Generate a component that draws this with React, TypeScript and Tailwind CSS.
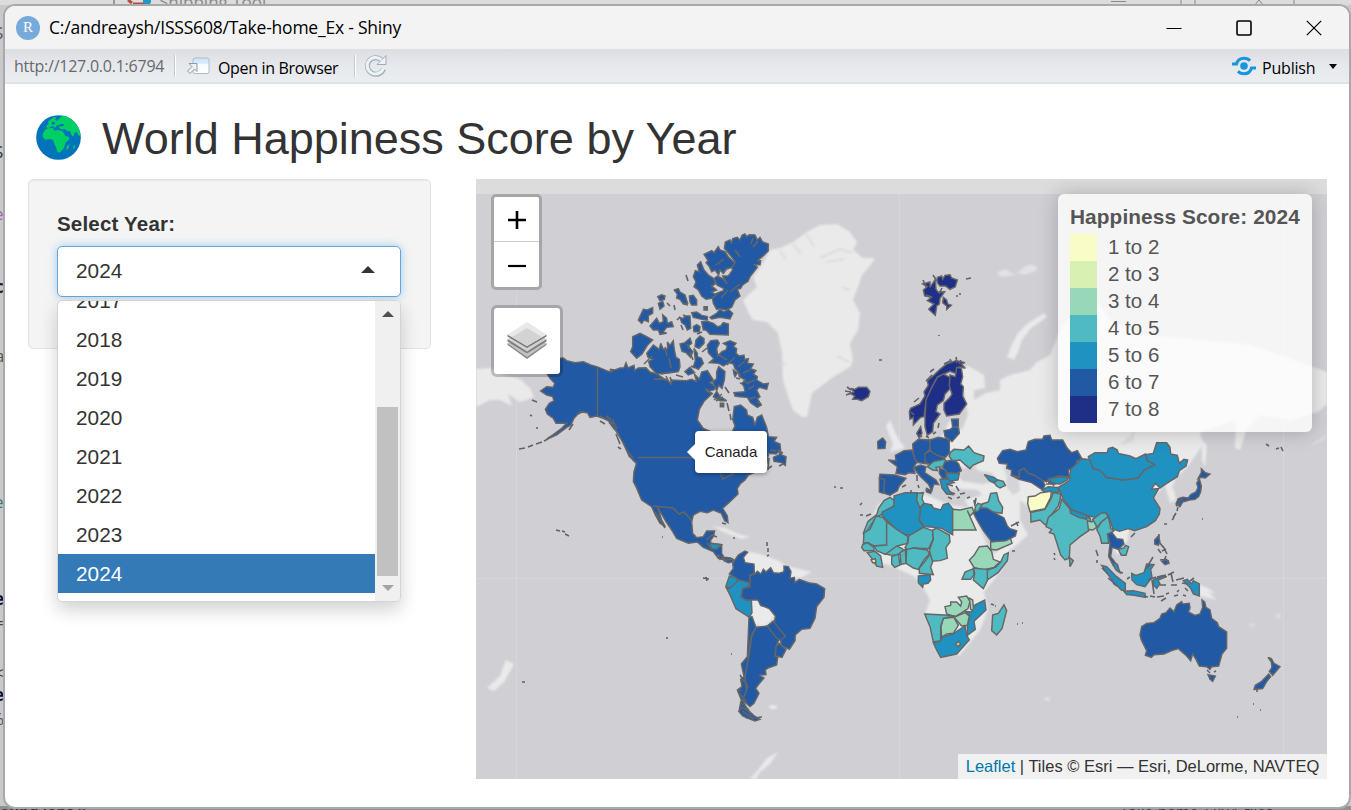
import React from "react";

type Shape = [color: string, points: string];

const C12 = "#fafcc8";
const C23 = "#d9f0b3";
const C34 = "#98d8b8";
const C45 = "#4fbac1";
const C56 = "#2092c1";
const C67 = "#2159a5";
const C78 = "#1f2e87";

const LEGEND: [string, string][] = [
  ["bg-[#fafcc8]", "1 to 2"],
  ["bg-[#d9f0b3]", "2 to 3"],
  ["bg-[#98d8b8]", "3 to 4"],
  ["bg-[#4fbac1]", "4 to 5"],
  ["bg-[#2092c1]", "5 to 6"],
  ["bg-[#2159a5]", "6 to 7"],
  ["bg-[#1f2e87]", "7 to 8"],
];

const YEARS = ["2017", "2018", "2019", "2020", "2021", "2022", "2023", "2024"];

const ARCTIC: Shape[] = [
  [C67, "313,85 316,66 330,60 335,70 338,56 352,52 360,60 366,46 375,42 380,50 388,44 405,45 412,60 420,52 428,66 445,72 445,92 432,106 412,122 422,122 420,134 404,134 412,142 390,170 384,184 368,195 362,205 352,208 360,228 345,240 335,262 318,270 300,266 290,268 280,250 276,226 295,218 310,212 312,206 292,196 282,176 292,168 308,176 322,192 308,168 325,168 338,150 330,130 345,125 330,105"],
  [C67, "252,103 275,92 282,98 295,80 300,90 315,95 326,112 345,130 335,142 318,148 308,158 300,150 296,165 285,150 275,155 268,140 258,128 264,122"],
  [C67, "220,170 226,152 238,156 232,135 242,125 252,150 265,165 280,175 286,192 275,198 290,210 275,216 288,225 275,235 258,238 245,228 235,210 222,200 228,186"],
  [C67, "163,210 175,206 180,216 195,225 203,250 190,252 180,238 170,235 172,222"],
  [C67, "208,228 220,226 230,240 230,255 215,255 210,246"],
  [C67, "113,230 125,224 135,228 133,238 120,242"],
  [C67, "115,250 128,244 132,258 120,268"],
  [C67, "55,300 70,268 82,270 98,263 98,280 85,287 85,305 72,300 65,310"],
  [C67, "90,318 110,295 118,310 130,305 128,284 140,295 142,310 155,305 160,320 140,322 130,335 140,340 120,343 115,330 100,330"],
  [C67, "180,292 190,296 195,288 210,288 212,325 202,330 195,315 185,308"],
  [C67, "215,278 230,276 245,286 262,290 262,300 245,298 220,292"],
  [C67, "270,292 290,280 300,268 312,276 325,268 338,280 330,297 300,292 275,297"],
  [C67, "245,305 262,304 280,310 292,320 302,318 310,308 325,312 325,345 270,343 258,330 250,330"],
  [C67, "220,320 230,314 240,320 238,335 222,335"],
  [C67, "38,350 60,340 80,350 98,360 82,376 66,402 50,415 32,395 38,380"],
  [C67, "80,400 100,375 118,388 122,370 130,388 143,386 142,366 150,376 160,362 163,390 168,412 178,418 180,440 175,455 150,458 110,462 90,440 86,424 98,418 84,412"],
  [C67, "180,372 195,368 210,355 215,370 205,378 218,395 212,412 198,398 186,394"],
  [C67, "228,360 240,348 252,356 252,370 237,385 225,380"],
  [C67, "222,385 232,400 232,410 244,415 250,430 235,448 220,440 226,422"],
  [C67, "195,455 210,442 224,458 205,465"],
  [C67, "265,398 262,376 272,362 292,360 298,370 290,385 293,408 306,395 318,390 322,378 310,370 330,362 348,370 340,380 350,386 348,400 358,408 372,405 374,418 385,416 382,430 400,432 392,446 408,452 400,462 412,470 410,480 430,492 445,490 440,508 418,502 410,510 420,530 412,536 424,555 412,562 392,548 382,532 360,530 345,528 342,518 375,515 372,500 366,490 376,480 358,470 355,455 345,446 340,432 326,428 310,438 296,430 268,428 282,416"],
  [C67, "280,530 290,514 300,530 320,542 300,542"],
  [C67, "290,455 296,440 315,455 313,480 306,505 296,496 290,512 278,486 290,476"],
  [C67, "340,450 352,458 345,470 342,462"],
  ["#666", "252,260 262,260 262,270 252,270"],
  ["#666", "301,550 311,550 311,560 301,560"],
  [C78, "692,505 705,508 715,502 740,502 750,514 745,530 725,542 712,538 698,538 704,528 690,520 702,516"],
];

const NORTH_AMERICA: Shape[] = [
  [C67, "135,60 190,54 200,62 225,68 250,65 272,75 290,80 325,94 338,96 330,88 345,90 360,84 372,84 378,68 384,84 402,76 404,92 415,84 438,83 450,96 470,102 490,115 462,118 500,118 515,134 512,120 560,122 575,118 590,125 583,102 598,118 605,96 622,92 640,120 630,128 650,142 640,150 620,152 635,162 612,184 598,208 592,240 610,265 632,275 650,305 690,330 694,280 705,258 698,238 703,200 722,195 740,210 742,225 758,232 765,255 772,232 785,225 800,262 805,290 830,292 822,304 840,312 842,330 828,342 806,340 800,370 775,392 745,405 735,420 722,430 712,445 714,462 685,490 668,505 682,528 684,548 674,542 664,520 640,510 622,518 600,514 580,525 575,545 578,580 590,593 610,590 620,573 644,573 640,590 632,600 632,610 665,614 665,640 672,652 692,654 705,662 690,664 655,655 640,635 610,622 592,606 565,610 530,595 515,570 498,545 472,500 485,540 496,560 480,550 466,525 455,500 425,480 408,440 400,425 402,395 410,368 388,350 370,310 350,275 325,240 290,228 270,232 262,218 240,215 222,235 212,256 200,262 170,285 140,298 165,280 185,265 200,250 168,250 160,235 142,222 136,208 148,190 162,182 158,170 140,165 122,153 140,140 160,142 164,130 150,115 140,100"],
  [C56, "630,610 665,614 650,628 634,626"],
  [C78, "652,645 668,652 660,658"],
  [C67, "820,352 838,344 840,328 845,345 858,350 856,376 845,368 822,364"],
];

const SOUTH_AMERICA: Shape[] = [
  [C67, "128,112 138,120 158,118 158,126 145,128 132,122"],
  [C67, "158,130 175,105 195,93 203,97 190,112 195,128 222,132 223,160 210,165 210,200 185,185 165,172 148,162 160,145"],
  [C56, "148,168 165,172 176,182 165,192 148,206 138,198"],
  [C56, "137,200 148,206 176,180 206,188 206,198 188,206 183,230 196,240 214,240 216,278 208,292 168,266 150,225"],
  [C67, "210,166 225,162 232,154 243,162 250,148 258,156 272,143 280,158 296,160 312,155 312,138 325,140 333,155 330,175 343,172 345,188 358,178 385,188 410,192 434,206 432,232 410,260 405,295 390,325 365,328 346,345 345,362 328,388 304,376 300,345 285,330 262,318 284,304 286,288 268,266 242,256 234,240 215,240 196,240 184,230 188,206 210,200"],
  [C67, "207,292 216,290 228,322 215,345 210,370 205,420 195,470 200,515 188,540 205,575 228,592 200,594 178,568 184,540 172,510 186,500 182,478 192,470 184,432 202,410"],
  [C67, "228,322 262,318 285,338 298,355 290,375 285,408 293,412 290,435 262,445 256,450 258,464 238,466 252,474 240,488 227,505 237,520 222,550 210,560 188,540 200,510 195,470 207,405 215,350"],
  [C67, "262,318 280,303 300,330 316,348 302,362 288,352"],
  [C67, "297,370 318,388 306,412 286,408 288,380"],
  [C67, "186,562 200,570 212,582 240,598 225,603 206,596 188,588 176,574"],
];

const EUROPE: Shape[] = [
  [C78, "218,72 240,66 240,82 256,58 258,88 264,96 284,95 270,115 268,132 260,138 256,166 236,148 252,132 232,122 244,112 224,108 220,90 232,80"],
  [C78, "262,52 275,48 278,58 285,46 300,44 305,54 322,60 316,80 300,88 286,78 270,78 262,68"],
  [C78, "280,112 290,120 293,132 304,136 290,148 290,138 278,128"],
  [C78, "178,455 182,445 210,432 225,408 222,396 235,376 232,362 252,345 270,328 290,312 318,302 330,304 345,308 334,312 346,325 328,320 322,342 300,334 275,345 262,352 244,385 240,400 228,422 222,470 212,472 190,495 190,472 180,478"],
  [C78, "225,475 228,420 244,385 262,352 280,342 300,352 300,386 285,402 280,422 262,435 258,455 270,462 250,490 248,515 232,526 225,500"],
  [C78, "300,345 316,350 320,322 334,325 338,350 332,372 340,380 338,408 350,432 328,462 290,468 282,450 282,430 300,412 306,402 298,378"],
  [C78, "200,520 212,500 216,520 208,535"],
  [C67, "305,478 325,477 325,500 308,502"],
  [C67, "282,512 300,508 312,500 326,504 328,520 306,545 285,530"],
  [C67, "188,552 205,538 240,540 240,568 224,582 240,600 232,612 196,606 190,580"],
  [C67, "240,540 265,532 298,538 298,580 286,592 252,585 240,570"],
  [C67, "115,600 138,602 136,586 162,572 186,570 192,590 200,608 190,622 195,640 176,638 166,644 138,640 142,620"],
  [C67, "90,643 135,645 168,655 148,678 142,692 120,706 102,700 100,660 88,655"],
  [C67, "88,655 104,658 100,700 88,696"],
  [C67, "192,622 212,615 228,620 224,638 258,660 266,674 252,672 245,692 235,672 212,650 200,636"],
  [C67, "224,582 240,572 262,586 284,594 280,604 256,602 240,614 226,606"],
  [C45, "232,620 250,605 284,598 292,606 278,620 258,622 262,632 248,630"],
  [C67, "284,606 312,598 326,612 334,632 318,642 292,638 278,622"],
  [C56, "290,640 328,640 324,660 300,664 292,652"],
  [C67, "268,624 288,632 290,655 278,656 268,640"],
  [C56, "270,658 292,656 312,668 290,672 296,690 308,704 290,702 276,684"],
  [C67, "83,545 98,534 107,545 105,565 84,566"],
  [C45, "298,590 300,578 312,568 342,570 356,558 372,578 402,588 400,602 368,616 360,626 345,614 330,600 308,602"],
  [C56, "403,644 432,652 445,662 430,668 418,662"],
  [C45, "432,668 445,660 460,664 466,676 450,684 440,678"],
  [C67, "228,690 246,690 242,700 230,696"],
];

const AFRICA: Shape[] = [
  [C45, "132,78 134,62 120,52 102,62 86,84 80,104 54,124 40,160 46,180 52,152 78,112 98,102"],
  [C45, "78,108 98,112 110,125 110,196 72,198 54,188 40,190 42,158 60,148"],
  [C56, "132,48 165,38 202,38 200,60 212,88 208,122 222,142 182,165 165,165 138,148 95,105 97,96 132,78"],
  [C45, "202,40 220,38 216,56 222,70 210,84 200,60"],
  [C56, "212,82 222,70 245,75 250,84 272,90 280,74 295,70 308,86 308,164 275,145 250,142 222,140 208,120"],
  [C34, "308,88 330,90 366,82 372,96 360,108 352,92 378,150 308,150"],
  [C45, "110,125 140,148 174,170 172,190 142,198 120,215 106,223 80,212 72,198 110,195"],
  [C45, "174,188 176,168 220,142 248,152 250,176 236,206 192,204 175,212 165,202"],
  [C45, "248,150 260,144 298,165 300,186 288,202 292,235 270,242 246,244 238,210 250,178"],
  [C45, "170,208 190,204 232,210 238,222 222,240 205,268 190,264 168,250"],
  [C45, "240,222 248,245 242,262 250,284 208,280 208,264 228,240"],
  [C45, "108,222 140,198 158,206 160,216 145,226 120,225"],
  [C45, "125,230 145,222 150,255 134,262 125,252"],
  [C45, "150,218 166,208 168,250 153,253"],
  [C45, "38,194 52,188 72,202 72,212 42,212 35,202"],
  [C45, "52,218 75,214 92,228 98,262 80,258 66,236"],
  [C23, "63,240 76,236 78,248 68,248"],
  [C56, "205,288 240,284 242,300 234,310 220,312 218,322 205,308"],
  [C34, "372,226 388,200 412,198 425,215 430,238 450,246 432,262 400,270 372,262 358,240"],
  [C45, "412,270 436,262 452,246 462,224 475,218 472,242 444,278 412,300"],
  [C45, "370,265 412,268 412,302 400,326 370,300 374,280"],
  [C45, "336,298 345,276 370,266 372,284 362,298"],
  [C34, "285,380 302,376 302,366 320,366 332,378 335,366 325,352 350,348 360,364 354,386 332,400 315,410 290,402"],
  [C34, "358,354 368,360 370,380 376,398 362,388"],
  [C56, "375,375 404,360 408,390 372,424 376,448 352,466 352,438 360,408 346,394 366,396"],
  [C34, "312,412 345,398 358,408 352,436 335,438"],
  [C34, "280,415 312,412 325,436 310,460 290,462 275,472 273,440"],
  [C45, "224,402 285,405 315,408 280,415 272,440 272,482 250,486 240,440"],
  [C56, "250,488 270,484 278,470 308,462 345,438 350,466 358,480 320,522 272,532 260,510"],
  [C34, "316,492 326,484 332,492 324,500"],
  [C45, "428,405 445,400 462,374 470,392 456,446 440,465 425,452"],
  [C34, "422,185 465,182 480,170 486,190 440,210 422,208"],
  [C67, "370,98 388,84 410,82 430,96 462,114 472,138 480,146 500,152 496,168 468,182 425,185 400,152 380,118"],
  [C45, "396,72 415,66 422,40 440,38 446,62 458,82 456,100 430,96 410,84 390,84"],
  [C45, "376,80 384,70 396,74 386,92 374,96"],
];

const ASIA: Shape[] = [
  [C67, "52,175 68,152 90,148 112,155 138,150 145,125 165,118 188,118 192,108 210,106 215,120 248,120 262,145 275,158 292,152 305,175 290,184 292,198 265,210 268,230 235,228 212,236 200,245 180,240 162,225 145,220 132,205 118,212 118,238 94,224 95,210 80,205 82,192 58,190"],
  [C67, "92,225 118,232 118,212 132,206 146,220 164,226 188,242 195,255 188,270 155,248 118,238"],
  [C56, "205,236 235,232 268,230 262,240 240,252 206,250"],
  [C56, "186,270 205,260 232,262 240,276 215,278 194,276"],
  [C56, "235,262 268,242 272,208 305,176 328,178 340,205 362,212 378,232 428,240 474,234 492,210 524,194 502,182 498,164 520,160 530,128 560,128 570,142 572,162 592,166 598,190 612,178 623,180 618,198 598,212 592,230 560,250 540,264 526,250 514,268 536,266 520,294 540,325 538,342 526,362 500,380 464,392 445,386 418,394 398,386 385,345 345,352 318,346 276,330 250,298"],
  [C56, "325,170 345,158 382,158 385,146 398,142 412,150 415,160 450,168 468,176 496,162 502,182 524,194 492,210 474,234 428,240 378,232 362,212 340,205"],
  [C12, "145,290 165,288 182,278 214,274 212,292 195,326 150,335 143,310"],
  [C45, "152,338 195,328 212,298 220,278 242,282 240,300 235,318 210,350 205,370 195,374 180,360 153,366"],
  [C45, "205,352 238,326 245,298 268,325 296,345 330,355 335,375 326,392 300,410 270,435 268,474 255,480 242,465 222,402 208,398 215,388 198,380"],
  [C56, "270,328 320,345 320,358 296,352 272,340"],
  [C34, "322,362 334,366 345,360 350,382 338,390 325,388"],
  [C45, "338,358 362,340 378,338 384,352 364,366 352,382"],
  [C45, "350,388 364,366 384,350 388,362 392,386 402,392 384,404 386,430 365,430 360,408"],
  [C67, "382,402 396,398 410,416 428,418 432,432 415,448 396,442 392,470 406,488 400,496 386,470 390,430"],
  [C45, "415,448 432,444 436,436 446,440 438,466 424,466"],
  [C56, "396,488 412,492 420,518 408,510"],
  [C56, "365,496 380,500 410,530 436,550 436,572 424,570 400,545 378,515"],
  [C56, "432,574 460,572 495,580 496,592 462,586 440,584"],
  [C56, "455,520 468,526 492,518 500,492 522,494 512,508 516,532 495,560 470,554 456,540"],
  [C56, "520,540 545,528 560,530 534,540 540,552 530,565 520,555"],
  [C56, "610,542 622,538 635,552 640,542 658,552 658,588 640,582 632,565"],
  [C67, "524,420 535,408 540,425 535,436 524,432"],
  [C67, "545,484 560,478 566,490 555,494"],
  [C45, "268,472 280,482 270,500"],
  [C67, "595,296 608,292 625,294 632,284 648,276 654,262 650,250 658,236 664,258 662,275 656,290 645,298 628,300 608,306 600,320 588,312"],
  [C67, "654,236 664,218 664,206 676,218 690,222 676,234 664,232"],
];

const OCEANIA: Shape[] = [
  [C67, "485,140 500,130 522,128 540,115 545,102 558,98 570,84 582,95 590,75 605,65 608,72 628,70 630,84 625,96 645,106 660,102 668,82 666,60 674,66 678,82 690,90 695,115 712,128 716,140 740,156 740,205 726,222 716,258 695,260 690,268 680,260 658,258 648,238 638,222 632,242 620,228 595,206 575,212 552,222 522,224 514,232 496,226 500,212 484,180 480,165"],
  [C67, "684,284 706,288 698,304 690,298"],
  [C67, "864,232 874,236 882,250 900,260 878,286 868,274 876,262 874,246"],
  [C67, "866,282 872,290 860,305 848,326 822,328 826,316 845,304"],
];

const GROUPS: [string, Shape[]][] = [
  ["translate(500 340) scale(.33333)", NORTH_AMERICA],
  ["translate(620 220) scale(.33333)", ARCTIC],
  ["translate(680 520) scale(.33333)", SOUTH_AMERICA],
  ["translate(850 260) scale(.33333)", EUROPE],
  ["translate(850 480) scale(.33333)", AFRICA],
  ["translate(980 400) scale(.33333)", ASIA],
  ["translate(980 580) scale(.33333)", OCEANIA],
];

/* Islets and fjords: short strokes in page units. */
const ISLETS =
  "M519 449l6-1M528 447l5-2M536 444l6-2M544 441l4-2M548 438l9-4M532 400l5 2M530 415l2 1M537 427v2M556 530l4 1M562 531l3 1M565 534l4 2M662 537h1M686 275l2 6M674 305l1 5M667 303l3 3M677 320l3-3M681 325l2 5M684 304l4 1M683 315l4 2M697 334l5-2M687 344l2 5M661 374l12-2M676 375l7 2M664 380l5 1M672 382l-2-5M691 366l4 2M606 416l8 5M609 422l6 8M613 421l4 8M616 434l4 10M622 440l3 6M627 450l6 8M632 459l5 5M573 424l-4 6M578 414l6-3M655 512l8 12M665 528l-6-10M769 458l-1 12M766 470l6-4M727 403l2 8M730 414l1 6M725 387l4 6M736 378l4 1M740 383l3 1M749 384l-6-3M737 372l4 3M757 402l4 2M702 352l5-4M716 350l2 5M722 523l4 1M733 538h2M767 542v4M768 548v4M769 555l-2 1M703 578l6 1M706 577l1 4M731 654h1M739 693l8 9M740 702l9 8M742 711l12 8M746 708l8 8M745 680l3 8M740 675l5 8M738 690l4 1M754 718l8-1M667 637v2M522 682h3M777 450l6 3M779 466l4-2M600 421l5 3M618 447l3 2" +
  "M845 391l6 1M846 395l6-2M847 387l4 3M879 360h3M939 335v1M966 279l5-1M956 296h2M959 294h2M923 280l3 7M926 295l6 2M933 275l4 6M942 288l-3 6M930 372l4-3M926 381l6-6M944 364l6-3M950 359l2 4M956 357l1 6M961 360l-2 4M919 398l-5 4M914 415l-3-3M938 428l1-5M919 434l3 3M926 436l3 2M933 434l3-2M902 487l4-2M911 492v-2M917 475v6M918 485l1 3M926 488l5 3M947 484l6 2M950 492l5 2M956 486l3 5M960 494l5-1M948 497l4 2M957 498l3-1M967 498l3-1M860 505l2-2M860 515h3M866 516l5-2M834 487h2M840 488h3M1011 526l8-4M1016 522l2 4M974 500l1 6M976 498l-1 6M991 604l3 1M995 606h1M1017 624h1M1022 623h1M1012 551h3" +
  "M1266 444l3 2M1276 449l3-1M1281 447l2 4M1173 518l3-5M1177 511l1-4M1172 520l2-2M1176 506l4-3M1178 502l5-3M1164 524h3M1202 519h1M1096 550l2 6M1097 560v3M1054 553l1 2M1054 558l1 2M1131 537l4-4M1159 534v4M1160 543l3 4M1162 551l4-2M1158 549l3 4M1166 556l-2 5M1160 560l6-1M1153 557l-6 10M1150 565l-4 4M1163 546l4 8M1168 560l1 4M1102 568l6 6M1108 578l6 5M1113 583l4 3M1120 572l3 1M1127 579l3-2M1148 580l8-3M1157 577l9-2M1171 573l2 9M1168 575l6-3M1171 585h6M1166 585h-6M1176 580l8-2M1182 583l6 1M1185 588l3 3M1190 581l4-3M1150 596l5 1M1157 597l7-1M1161 601l5-3M1166 594l3-1M1174 596l4-1M1177 592l2-2M1183 595l3 1M1148 597l-4-1M1152 580l2 14M1207 670l3 3M1214 672l2-1M1257 689v3M1253 704h1M1260 710h1M1237 717h1M1048 481l8 3M1046 484h8M1088 516l2 2M1050 480l4 6";

/* Country borders drawn over larger polygons, page units. */
const BORDERS =
  "M597.500 368V416M638 457.500H740M653 506l20 2 6 6 5-2 8 9M720 473l3 6 8-4 5-3M706 540l6-5 5 2M711 548l-4-5M760 447l4 2M770 450l6 1M668 380l-2-4M600 416l14 8M620 437l-5-8M714 400l8-6M705 388l8 6M716 401l7-4" +
  "M727 268l-4 6M735 250l5 7M753 238l-2 6M758 241l-5 6M716 265l8-6M740 284l-10 8M728 290l-7 8M652 356l-8 8M665 347l2 9M690 352l3 8M669 358l2 10M719 355l8 5M735 357l-8 8M745 361l-7 6M750 370l-7 3M755 380l-8 3M748 389l6-3M756 397l-7 2";

const LAND = [
  "770,250 780,248 793,242 807,232 820,225 837,224 850,232 857,242 853,250 863,258 875,258 872,263 862,275 858,287 853,300 860,313 858,330 850,343 853,360 850,367 833,377 820,387 812,393 807,417 802,417 793,410 787,393 783,380 782,353 778,333 767,322 753,320 748,312 743,300 757,287 753,277 763,263",
  "476,369 490,368 503,375 520,379 530,388 534,397 520,402 508,394 512,406 500,400 490,400 476,407",
  "745,551 760,554 777,560 787,566 812,572 800,578 750,576 740,566",
  "750,600 760,598 775,616 765,627 752,624",
  "886,426 890,420 895,432 899,440 905,448 890,452 893,444",
  "960,370 968,366 984,375 985,388 974,390 974,400 986,393 1000,390 1000,380 1010,375 1030,370 1037,362 1050,355 1060,330 1080,305 1095,300 1110,320 1140,335 1200,340 1250,345 1327,372 1327,404 1318,412 1290,420 1260,415 1247,428 1240,450 1235,448 1236,420 1200,432 1203,445 1188,466 1176,478 1170,492 1176,500 1170,503 1165,485 1130,520 1128,540 1118,555 1110,545 1100,500 1040,495 1033,510 1020,500 1020,520 1028,535 1012,549 990,556 973,515 965,500 982,495 978,490 950,488 955,475 975,470 976,460 965,468 955,466 940,440 950,420 962,430 968,415",
  "895,495 920,492 950,505 970,508 980,530 988,551 1010,550 1000,572 984,592 988,610 980,630 960,655 942,655 932,632 925,614 930,600 922,585 915,577 890,565 872,562 863,540 878,505",
  "1014,360 1007,357 1012,344 1018,333 1027,324 1044,313 1047,317 1030,329 1022,340 1018,352",
  "1198,584 1208,588 1216,594 1208,592 1217,600 1200,596",
  "1202,440 1207,445 1205,467 1202,460",
  "1168,486 1174,490 1176,500 1171,500",
  "487,688 500,676 506,660 514,664 504,682 494,691",
  "750,779 758,770 767,758 778,752 770,764 760,772 756,779",
  "712,526 725,528 738,534 750,537 742,539 726,533",
];

function WorldMap() {
  return (
    <svg className="block h-full w-full" viewBox="476 179 851 600" role="img" aria-label="World map">
      <defs>
        <filter id="soft" x="-5%" y="-5%" width="110%" height="110%">
          <feGaussianBlur stdDeviation="0.9" />
        </filter>
      </defs>
      <rect x="476" y="179" width="851" height="600" fill="#d0cfd4" />
      <rect x="476" y="179" width="851" height="15" fill="#dcdcdc" />
      <g fill="#eaeaea" filter="url(#soft)">
        {LAND.map((p) => (
          <polygon key={p} points={p} />
        ))}
        <path d="M998 272q8-5 12 0t14-5q8-6 14 2-12 8-20 4-12 6-20 2z" opacity=".7" />
        <ellipse cx="773" cy="707" rx="4" ry="2" />
        <ellipse cx="1047" cy="699" rx="3" ry="2" opacity=".6" />
        <ellipse cx="1278" cy="616" rx="3" ry="2" opacity=".5" />
        <ellipse cx="1252" cy="625" rx="3" ry="2" opacity=".4" />
        <path d="M1312 445l15-9" stroke="#dedee1" strokeWidth="2" />
      </g>
      <g stroke="#d8d7db" strokeWidth="1.500" fill="none" filter="url(#soft)">
        <path d="M793 244l8 10M806 234l8 12M820 258l20-9 12 4M826 262l18-3M780 251l6 8M849 362l-12-6M786 365l-6-2M850 290l-8-3" />
      </g>
      <g fill="#d0cfd4" filter="url(#soft)">
        <path d="M1003 466l10-1 5 8 2 18-7 4-8-10 2-8z" opacity=".8" />
        <path d="M958 475l14-8 8 4 12 2 4 8-14 3-20-3z" />
        <path d="M1118 446l12-10 5-6-2 12z" opacity=".5" />
        <path d="M972 508l3 2 20 35 18-4-22 14-6-15z" />
      </g>
      <g stroke="#f2f2f3" strokeWidth="1" opacity=".22">
        <path d="M516.500 194V779M899.500 194V779M1283.500 194V779M476 578.500H1327" />
      </g>
      {GROUPS.map(([transform, shapes]) => (
        <g key={transform} transform={transform} stroke="#666" strokeWidth="4.300" strokeLinejoin="miter" strokeMiterlimit="3">
          {shapes.map(([fill, points]) => (
            <polygon key={points} fill={fill} points={points} />
          ))}
        </g>
      ))}
      <path d={ISLETS} fill="none" stroke="#5f646b" strokeWidth="1.600" />
      <path d={BORDERS} fill="none" stroke="#666" strokeWidth="1.500" />
    </svg>
  );
}

function Globe() {
  return (
    <svg className="h-[45px] w-[45px]" viewBox="0 0 135 135" aria-hidden="true">
      <circle cx="67.500" cy="67.500" r="67" fill="#0074ba" />
      <g fill="#00d063">
        <path d="M20 58l6-12 10-6 14-1 6 8 10-2 14 4 8 14 12 3-2 8-10 10-4 14-8 10-6 5-6-3-4-14-6-12-2-8-8-4-16 2-8-8z" />
        <path d="M30 34l8-6-2-8 10-8 8-6 8 2-6 6 8 4 6-8 8-6-2-3 18 4 20 14 14 20 6 22-6 2-6-12-6 2-4 12-6-6-4-10-8 0-6-6-12 0-6-4-4-8-6 2-2 6-8-6-8 4-6 4z" />
        <path d="M94 92l6-5-2 12-5 6-2-7zM113 92l5-2-2 8-5 3z" />
      </g>
      <path fill="#0074ba" d="M46 22l8-2 4 6-8 4zM66 30l12-4 8 3-4 4-14 2z" />
    </svg>
  );
}

function LayersIcon() {
  return (
    <svg className="h-[40px] w-[40px]" viewBox="0 0 40 40" aria-hidden="true">
      <path d="M.5 22L20 33.500 39.500 22V24L20 38 .5 24z" fill="#8a8a8a" />
      <path d="M.5 22.500L20 11l19.500 11.500L20 36z" fill="#c2c2c2" />
      <path d="M.5 18L20 29l19.500-11v2.500L20 32.500.5 20.500z" fill="#808080" />
      <path d="M.5 18L20 6l19.500 12L20 30.500z" fill="#d2d2d2" />
      <path d="M.5 13.500L20 25l19.500-11.500V15.500L20 27 .5 15.500z" fill="#7a7a7a" />
      <path d="M.5 13.500L20 1l19.500 12.500L20 25z" fill="#e9e9e9" />
      <path d="M5 16L20 7l15 9-15 9z" fill="#d3d3d3" />
    </svg>
  );
}

function OpenIcon() {
  return (
    <svg className="h-[18px] w-[24px]" viewBox="0 0 24 18" aria-hidden="true">
      <defs>
        <linearGradient id="page" x1="0" y1="0" x2="0" y2="1">
          <stop offset="0" stopColor="#c8e2fa" />
          <stop offset=".35" stopColor="#ddedfb" />
          <stop offset=".4" stopColor="#f7fbff" />
          <stop offset="1" stopColor="#fff" />
        </linearGradient>
      </defs>
      <rect x="6" y="1" width="16" height="15.500" rx="2" fill="url(#page)" stroke="#a9bccf" />
      <path d="M2 6.500h8v8l-2.500-2.500-4.500 4.500-2.500-2.500 4.500-4.500z" fill="#eef2f6" stroke="#8d9aaa" />
    </svg>
  );
}

function TitleBar() {
  return (
    <header className="flex h-[43px] shrink-0 items-center bg-[#f3f3f3] pl-[11px]">
      <span className="flex h-6 w-6 items-center justify-center rounded-full bg-[#75aadb] font-['Liberation_Serif',serif] text-[15px] leading-none text-white">
        R
      </span>
      <h1 className="ml-[9px] whitespace-nowrap font-['Open_Sans','Noto_Sans',sans-serif] text-[17.500px] tracking-[-0.22px] text-black">
        C:/andreaysh/ISSS608/Take-home_Ex - Shiny
      </h1>
      <div className="ml-auto mr-[27px] flex items-center gap-[54px] text-black">
        <svg className="h-4 w-4" viewBox="0 0 16 16"><path d="M.5 8.500h15" stroke="currentColor" /></svg>
        <svg className="h-4 w-4" viewBox="0 0 16 16"><rect x="1" y="1" width="14" height="14" rx="1.500" fill="none" stroke="currentColor" strokeWidth="1.600" /></svg>
        <svg className="h-4 w-4" viewBox="0 0 16 16"><path d="M.8.800l14.400 14.400M15.200.800L.8 15.200" stroke="currentColor" strokeWidth="1.200" /></svg>
      </div>
    </header>
  );
}

function Toolbar() {
  return (
    <div className="flex h-[35px] shrink-0 items-center border-b-2 border-[#dfe3e6] bg-gradient-to-b from-[#dcdee3] via-[#e6e8ec] to-[#ebeef1] pl-[9px] font-['Open_Sans','Noto_Sans',sans-serif] text-[16px] text-black">
      <span className="mt-px w-[160px] whitespace-nowrap text-[16px] tracking-[-0.24px] text-[#66696d]">http://127.0.0.1:6794</span>
      <i className="h-[22px] w-[2px] border-l border-[#c5c8cc] bg-white" />
      <span className="ml-[11px]"><OpenIcon /></span>
      <span className="ml-[7px] mt-[4px] w-[136px] whitespace-nowrap tracking-[-0.33px]">Open in Browser</span>
      <i className="h-[22px] w-[2px] border-l border-[#c5c8cc] bg-white" />
      <svg className="ml-[8px] h-[23px] w-[23px]" viewBox="0 0 23 23" aria-hidden="true">
        <path d="M17.500 6A8.300 8.300 0 1 0 19.500 15" fill="none" stroke="#9eacbd" strokeWidth="5" />
        <path d="M13 10.500h9v-9z" fill="#eef2f6" stroke="#9eacbd" />
        <path d="M17.500 6A8.300 8.300 0 1 0 19.300 14.500" fill="none" stroke="#edf2f7" strokeWidth="3" />
      </svg>
      <svg className="ml-auto mt-[1px] h-5 w-6" viewBox="0 0 24 20" aria-hidden="true">
        <circle cx="12" cy="10" r="3.800" fill="#1696dc" />
        <path d="M0 8h4.500Q6 2.300 12 2.300q4 0 6 2.500M24 12h-4.500Q18 17.700 12 17.700q-4 0-6-2.500" fill="none" stroke="#1696dc" strokeWidth="3" />
      </svg>
      <span className="ml-[6px] mt-[4px] w-[67px] tracking-[-0.2px]">Publish</span>
      <svg className="mr-[12px] mt-[2px] h-[5px] w-[8px]" viewBox="0 0 8 5"><path d="M0 0h8L4 5z" /></svg>
    </div>
  );
}

function Sidebar() {
  return (
    <aside className="relative h-[170px] w-[403px] shrink-0 rounded-[5px] border border-[#e2e2e2] bg-[#f4f4f4] px-[28px] pt-[31px] shadow-[inset_0_1px_1px_rgba(0,0,0,0.05)]">
      <label className="block h-[35px] text-[20.500px] font-bold leading-[25px] tracking-[0.2px]">Select Year:</label>
      <div className="flex h-[51px] w-[344px] items-center justify-between rounded-[5px] border border-[#66a5dd] bg-white pl-[18px] pr-[25px] text-[20.800px] shadow-[0_0_10px_rgba(102,175,233,0.6)]">
        <span className="-mt-px">2024</span>
        <svg className="mb-[5px] h-[7px] w-[14px]" viewBox="0 0 14 7"><path d="M0 7L7 0l7 7z" fill="#333" /></svg>
      </div>
      <div className="absolute left-[28px] top-[120px] z-10 flex h-[302px] w-[344px] overflow-hidden rounded-[5px] border border-[#d4d4d4] bg-white shadow-[0_8px_18px_rgba(0,0,0,0.18)]">
        <ul className="-mt-[20px] flex-1 text-[20.800px] text-[#333]">
          {YEARS.map((year) => (
            <li
              key={year}
              className={
                year === "2024"
                  ? "flex h-[39px] items-center bg-[#337ab7] pl-[18px] text-white"
                  : "flex h-[39px] items-center pl-[18px]"
              }
            >
              {year}
            </li>
          ))}
        </ul>
        <div className="flex w-[25px] flex-col items-center bg-[#f0f0f0] px-[2px] pb-[10px] pt-[10px]">
          <svg className="h-[6px] w-[12px]" viewBox="0 0 12 6"><path d="M0 6L6 0l6 6z" fill="#505050" /></svg>
          <div className="mb-[9px] mt-auto h-[169px] w-[21px] bg-[#c1c1c1]" />
          <svg className="h-[6px] w-[12px]" viewBox="0 0 12 6"><path d="M0 0h12L6 6z" fill="#a3a3a3" /></svg>
        </div>
      </div>
    </aside>
  );
}

function MapPanel() {
  return (
    <section className="relative h-[600px] w-[851px] shrink-0 overflow-hidden">
      <WorldMap />
      <div className="absolute left-[15px] top-[15px] flex h-[96px] w-[51px] flex-col rounded-[5px] border-[3px] border-[#a6a6a8] bg-white text-black">
        <div className="flex h-[45px] items-center justify-center border-b border-[#ccc] pt-[2px]">
          <svg className="h-[18px] w-[18px]" viewBox="0 0 18 18"><path d="M0 9h18M9 0v18" stroke="currentColor" strokeWidth="2.600" /></svg>
        </div>
        <div className="flex h-[45px] items-center justify-center pt-[3px]">
          <svg className="h-[18px] w-[18px]" viewBox="0 0 18 18"><path d="M0 9h18" stroke="currentColor" strokeWidth="2.200" /></svg>
        </div>
      </div>
      <div className="absolute left-[15px] top-[126px] flex h-[72px] w-[72px] items-center justify-center rounded-[6px] border-[3px] border-black/20 bg-white bg-clip-padding">
        <LayersIcon />
      </div>
      <div className="absolute left-[219px] top-[252px] flex h-[42px] w-[72px] items-center justify-center rounded-[4px] bg-white text-[15px] text-[#222] shadow-[0_1px_4px_rgba(0,0,0,0.4)]">
        <i className="absolute -left-[8px] top-[13px] h-0 w-0 border-y-[8px] border-r-[8px] border-y-transparent border-r-white" />
        Canada
      </div>
      <div className="absolute left-[582px] top-[15px] h-[238px] w-[254px] rounded-[6px] bg-white/80 pl-[12px] pt-[10px] text-[20px] text-[#555] shadow-[0_0_20px_rgba(0,0,0,0.22)]">
        <h3 className="h-[30px] whitespace-nowrap text-[20.800px] font-bold leading-[26px] tracking-[0.1px]">Happiness Score: 2024</h3>
        {LEGEND.map(([color, label]) => (
          <div key={label} className="flex h-[27px] items-center">
            <i className={`h-full w-[27px] ${color}`} />
            <span className="ml-[11px] text-[20.500px]">{label}</span>
          </div>
        ))}
      </div>
      <footer className="absolute bottom-0 right-0 flex h-[25px] w-[369px] items-center justify-center whitespace-pre bg-white/70 text-[16.500px] text-[#333]">
        <a className="text-[#0078a8]">Leaflet</a> | Tiles © Esri — Esri, DeLorme, NAVTEQ
      </footer>
    </section>
  );
}

function Desktop() {
  return (
    <div className="absolute inset-0 overflow-hidden bg-[#c9c9cb] font-['Open_Sans',sans-serif] text-[17px] leading-none">
      <div className="h-[5px] w-full bg-[#dcdcdc]" />
      <div className="absolute left-[113px] top-0 h-[6px] border-l-2 border-[#999] pl-[44px] text-[#888]">
        <span className="-mt-[7px] block">Snipping Tool</span>
      </div>
      <svg className="absolute left-[127px] top-0 h-[6px] w-[26px]" viewBox="0 0 26 6"><path d="M1 0l4 3M6 4h12v-4" stroke="#b54c3c" strokeWidth="3" fill="none" /><circle cx="20" cy="1" r="4" fill="#2694c8" /></svg>
      <svg className="absolute left-[1100px] top-0 h-[6px] w-[251px]" viewBox="0 0 251 6"><path d="M11 1.500h15M81 0v6M95 0v6M154 6l5-6 5 6M194 0v6" fill="none" stroke="#888" /></svg>
      <span className="absolute -left-[6px] top-[24px] text-[#555]">S</span>
      <span className="absolute -left-[6px] top-[143px] text-[#333]">S</span>
      <span className="absolute -left-[6px] top-[205px] text-[#a36aa8]">e</span>
      <span className="absolute -left-[5px] top-[278px] font-bold text-[#222]">c</span>
      <span className="absolute -left-[5px] top-[347px] text-[#554]">a</span>
      <span className="absolute -left-[6px] top-[493px] text-[#357b6d]">e</span>
      <span className="absolute -left-[6px] top-[590px] font-bold text-[#113]">e</span>
      <span className="absolute -left-[6px] top-[614px] text-[#444]">=</span>
      <span className="absolute -left-[6px] top-[664px] text-[#444]">&lt;</span>
      <span className="absolute -left-[6px] top-[686px] font-bold text-[#113]">e</span>
      <span className="absolute -left-[10px] top-[710px] text-[#555]">%</span>
      <div className="absolute bottom-0 left-0 h-[4px] w-full bg-[#919193]" />
      <div className="absolute bottom-0 left-0 h-[6px] w-[600px] overflow-hidden text-[15px] font-bold text-[#333]">
        <span className="block">ound Jobs ::</span>
      </div>
      <div className="absolute bottom-0 left-[1120px] h-[5px] w-[200px] overflow-hidden text-[15px] text-[#335]">
        <span className="-mt-px block">Take-home_Ex04_files</span>
      </div>
    </div>
  );
}

export default function App() {
  return (
    <main className="relative h-[810px] w-[1351px] overflow-hidden">
      <Desktop />
      <div className="absolute left-[3px] top-[4px] flex h-[805px] w-[1348px] flex-col overflow-hidden rounded-[12px] border-2 border-[#a9a9ab] bg-white font-['Liberation_Sans',Arial,sans-serif] text-[#333]">
        <TitleBar />
        <Toolbar />
        <div className="flex flex-col pl-[23px]">
          <div className="flex h-[95px] items-center pl-[8px] pt-[12px]">
            <Globe />
            <h2 className="ml-[21px] mt-px whitespace-nowrap text-[45px] leading-none">World Happiness Score by Year</h2>
          </div>
          <div className="flex gap-[45px]">
            <Sidebar />
            <MapPanel />
          </div>
        </div>
      </div>
    </main>
  );
}
